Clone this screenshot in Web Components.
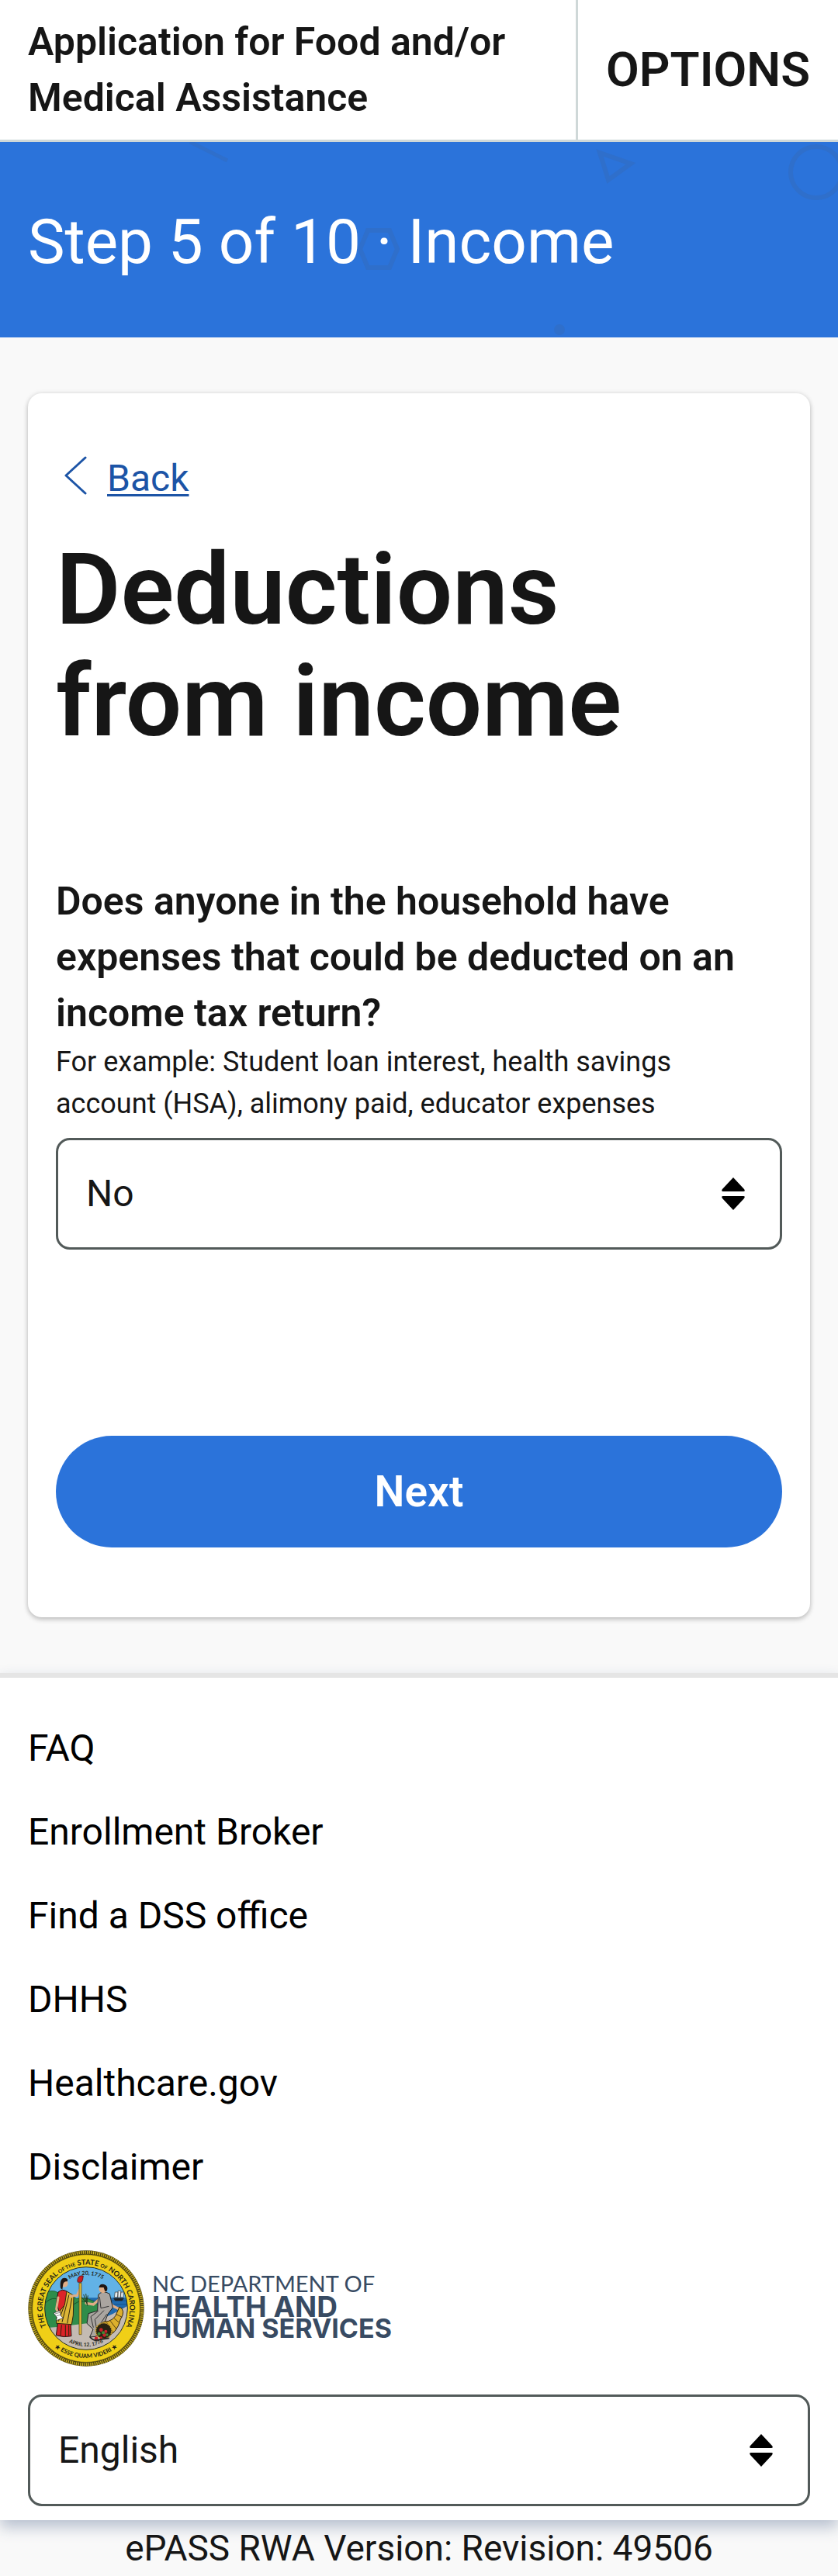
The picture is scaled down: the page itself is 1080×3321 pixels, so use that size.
<!DOCTYPE html>
<html lang="en">
<head>
<meta charset="utf-8">
<meta name="viewport" content="width=device-width, initial-scale=1">
<title>Deductions from income</title>
<style>
  :root {
    --ink: #161616;
    --blue: #2b73da;
    --link: #1c54a6;
    --field-border: #525a59;
    --gutter: 36px;
  }
  body {
    margin: 0;
    background: #f9f9f9;
    color: var(--ink);
    font-family: Roboto, "Liberation Sans", sans-serif;
    font-size: 48px;
    line-height: 72px;
  }
</style>
</head>
<body>
<epass-app></epass-app>

<template id="t-app">
  <style>
    :host { display: block; }
    main { padding: 72px var(--gutter); }
    .version { text-align: center; font-size: 46px; }
  </style>
  <epass-header>Application for Food and/or Medical Assistance</epass-header>
  <epass-step>Step 5 of 10 · Income</epass-step>
  <main>
    <epass-card>
      <epass-back></epass-back>
      <epass-heading>Deductions from income</epass-heading>
      <epass-select
        label="Does anyone in the household have expenses that could be deducted on an income tax return?"
        hint="For example: Student loan interest, health savings account (HSA), alimony paid, educator expenses"
        options="No,Yes"></epass-select>
      <epass-button>Next</epass-button>
    </epass-card>
  </main>
  <epass-footer></epass-footer>
  <div class="version">ePASS RWA Version: Revision: 49506</div>
</template>

<template id="t-header">
  <style>
    :host { display: block; background: #fff; border-bottom: 3px solid #cfd8d8; }
    header { display: flex; min-height: 180px; }
    .title { flex: 1; display: flex; align-items: center; padding: 0 var(--gutter); font-size: 50px; font-weight: 600; }
    button { margin: 0; border: 0; border-left: 3px solid #cfd8d8; background: none; color: inherit; font: 600 62px/72px Roboto, sans-serif; padding: 0 var(--gutter); }
  </style>
  <header>
    <div class="title"><span><slot></slot></span></div>
    <button type="button">OPTIONS</button>
  </header>
</template>

<template id="t-step">
  <style>
    :host { display: grid; background: var(--blue); color: #fff; overflow: hidden; }
    svg, p { grid-area: 1 / 1; }
    svg { width: 100%; height: 252px; }
    p { margin: 0; padding: 69px var(--gutter) 63px; font-size: 80px; line-height: 120px; }
  </style>
  <svg viewBox="0 0 1080 252" preserveAspectRatio="xMinYMin slice" fill="none" stroke="#2f6fcb" stroke-width="6" aria-hidden="true">
    <path d="M245 0L293 24" stroke-width="5"/>
    <path d="M773 14L813 28L784 49Z"/>
    <circle cx="1052" cy="39" r="33"/>
    <path d="M474 114H502L512 138L502 162H474L464 138Z"/>
    <circle cx="721" cy="242" r="7" fill="#2f6fcb" stroke="none"/>
  </svg>
  <p><slot></slot></p>
</template>

<template id="t-card">
  <style>
    :host { display: flex; flex-direction: column; background: #fff; border-radius: 18px; padding: 74px var(--gutter) 90px; box-shadow: 0 3px 6px rgba(0,0,0,.2), 0 0 6px rgba(0,0,0,.1); }
  </style>
  <slot></slot>
</template>

<template id="t-back">
  <style>
    :host { display: flex; }
    a { display: flex; align-items: center; gap: 26px; padding-left: 10px; color: var(--link); text-decoration: none; }
    span { text-decoration: underline; text-decoration-thickness: 3px; text-underline-offset: 4px; }
    svg { width: 30px; height: 50px; margin-bottom: 8px; }
  </style>
  <a href="#back">
    <svg viewBox="0 0 30 50" fill="none" stroke="currentColor" stroke-width="3" stroke-linecap="round" stroke-linejoin="round" aria-hidden="true"><path d="M28 2L3 25L28 48"/></svg>
    <span>Back</span>
  </a>
</template>

<template id="t-heading">
  <style>
    :host { display: block; margin-top: 35px; }
    h1 { margin: 0; font-size: 128px; line-height: 144px; font-weight: 600; }
  </style>
  <h1><slot></slot></h1>
</template>

<template id="t-select">
  <style>
    :host { display: block; margin-top: 150px; }
    :host([bare]) { margin-top: 0; }
    label { display: block; font-size: 50px; font-weight: 600; }
    .hint { margin-bottom: 17px; padding-right: var(--gutter); font-size: 36px; line-height: 54px; }
    .box { display: grid; align-items: center; }
    select, svg { grid-area: 1 / 1; }
    select { appearance: none; width: 100%; height: 144px; margin: 0; padding: 0 108px 0 36px; border: 3px solid var(--field-border); border-radius: 18px; background: #fff; color: var(--ink); font: 48px/72px Roboto, sans-serif; }
    svg { justify-self: end; width: 30px; height: 42px; margin-right: 48px; pointer-events: none; z-index: 1; }
  </style>
  <label for="field"></label>
  <div class="hint" id="hint"></div>
  <div class="box">
    <select id="field"></select>
    <svg viewBox="0 0 30 42" aria-hidden="true"><path d="M15 0L29 15Q31 18 28 18H2Q-1 18 1 15ZM15 42L29 27Q31 24 28 24H2Q-1 24 1 27Z"/></svg>
  </div>
</template>

<template id="t-button">
  <style>
    :host { display: block; margin-top: 240px; }
    button { display: block; width: 100%; height: 144px; margin: 0; padding: 0; border: 0; border-radius: 72px; background: var(--blue); color: #fff; font: 600 55px/72px Roboto, sans-serif; }
  </style>
  <button type="button"><slot></slot></button>
</template>

<template id="t-footer">
  <style>
    :host { display: flex; flex-direction: column; gap: 36px; padding: 37px var(--gutter) 18px; background: #fff; border-top: 6px solid #e5e5e5; box-shadow: 0 9px 18px rgba(30,60,110,.3); }
    ul { list-style: none; margin: 0 0 17px; padding: 0; }
    a { color: #000; text-decoration: none; line-height: 108px; }
    li { height: 108px; }
  </style>
  <nav aria-label="Footer">
    <ul>
      <li><a href="#faq">FAQ</a></li>
      <li><a href="#broker">Enrollment Broker</a></li>
      <li><a href="#dss">Find a DSS office</a></li>
      <li><a href="#dhhs">DHHS</a></li>
      <li><a href="#healthcare">Healthcare.gov</a></li>
      <li><a href="#disclaimer">Disclaimer</a></li>
    </ul>
  </nav>
  <epass-logo></epass-logo>
  <epass-select bare label="Language" options="English,Español"></epass-select>
</template>

<template id="t-logo">
  <style>
    :host { display: flex; align-items: center; gap: 10px; color: #384b63; font-family: Inter, sans-serif; font-weight: 700; }
    svg { width: 150px; height: 150px; flex: none; }
    .words { display: flex; flex-direction: column; padding-bottom: 8px; }
    .dept { font: 400 29px/32px Lato, sans-serif; }
    .health { font-size: 37px; line-height: 28px; }
    .human { font-size: 34px; line-height: 28px; }
  </style>
  <svg viewBox="48 63 450 450" aria-label="Great Seal of the State of North Carolina">
    <defs>
      <clipPath id="disc"><circle cx="273" cy="288" r="160"/></clipPath>
      <path id="arc" d="M136 387A169 169 0 1 1 410 387"/>
      <path id="bottom" d="M81 288A192 192 0 0 0 465 288"/>
      <path id="date1" d="M143 288A130 130 0 0 1 403 288"/>
      <path id="date2" d="M126 288A147 147 0 0 0 420 288"/>
    </defs>
    <circle cx="273" cy="288" r="224" fill="#4a410f"/>
    <circle cx="273" cy="288" r="217" fill="none" stroke="#cdb322" stroke-width="12" stroke-dasharray="4 4"/>
    <circle cx="273" cy="288" r="208" fill="#f0cf17" stroke="#6d6015" stroke-width="2"/>
    <g clip-path="url(#disc)">
      <path fill="#62b2e6" d="M110 120H440V300H110Z"/>
      <path fill="#206aae" d="M245 247H440V335H245Z"/>
      <path stroke="#104a80" stroke-width="2" d="M255 258H325M370 258H430M375 272H430M390 286H430"/>
      <path fill="#2f8d4a" stroke="#17552b" stroke-width="2" d="M105 235Q135 210 165 227Q205 222 235 250Q285 240 320 275L360 330L240 370H100Z"/>
      <path fill="none" stroke="#17552b" stroke-width="3" d="M112 270Q155 225 190 280M210 290Q240 245 285 267"/>
      <path fill="#c4bbb3" d="M100 365L160 360L300 343L375 310L440 275V460H100Z"/>
      <!-- tall ship -->
      <path fill="#e8edf0" stroke="#333" stroke-width="2" d="M385 225H396V245H382ZM397 220H407V246H394ZM408 225H417V245H405Z"/>
      <path fill="#222" d="M378 248H420L412 259H385Z"/>
      <!-- Liberty -->
      <path fill="#db2328" stroke="#201414" stroke-width="3" d="M165 225Q180 211 198 222L213 245L210 294L216 395Q188 402 157 392L169 304L158 263Z"/>
      <path fill="#dcb637" stroke="#30260d" stroke-width="3" d="M198 222L225 238L223 315L217 350L158 346L160 311L190 275Z"/>
      <path fill="none" stroke="#30260d" stroke-width="3" d="M207 235L180 341M218 248L200 346M188 278L166 338M178 352L174 393M193 352V396M206 352V393"/>
      <circle cx="188" cy="191" r="15" fill="#dfad86"/>
      <path fill="#201612" d="M174 210Q169 170 190 170Q206 172 200 184Q188 181 184 194L181 215Z"/>
      <path fill="none" stroke="#dfad86" stroke-width="9" stroke-linecap="round" d="M165 246L158 290L165 305M212 241L238 238L247 217"/>
      <path fill="#fff" stroke="#222" stroke-width="2" d="M147 306L171 297L176 318L185 325L157 335L160 323Z"/>
      <path stroke="#555" stroke-width="2" d="M153 309L171 304M158 317L174 313"/>
      <!-- liberty cap on its pole -->
      <path fill="#e2ba3a" stroke="#4c3b0d" stroke-width="2" d="M246 190H255V389H246Z"/>
      <path fill="#c91b22" stroke="#331010" stroke-width="2" d="M239 181Q241 158 262 162Q261 180 255 187H241Z"/>
      <!-- Plenty -->
      <path fill="none" stroke="#dfad86" stroke-width="10" stroke-linecap="round" d="M322 254L301 273L273 268M355 250L375 278L397 289"/>
      <path fill="#aaa5a0" stroke="#222" stroke-width="3" d="M320 235Q338 216 364 232L376 285L357 310L345 342L310 397L287 399L300 369L276 346L282 308L317 297Z"/>
      <path fill="none" stroke="#333" stroke-width="3" d="M325 243L330 287L361 280M320 298L291 320L301 362M342 296L307 331L315 375M353 310L329 346"/>
      <circle cx="338" cy="214" r="15" fill="#dfad86"/>
      <path fill="#201612" d="M322 207Q326 191 342 195Q360 201 354 220L346 223L341 207Z"/>
      <path fill="none" stroke="#273b20" stroke-width="3" d="M279 278L263 234M277 270L272 231M275 266L280 238M272 264L256 245"/>
      <!-- cornucopia -->
      <path fill="#dcaf2d" stroke="#30230b" stroke-width="3" d="M402 282Q428 296 406 330Q392 388 346 399L316 366L340 340Q382 340 394 300Z"/>
      <path fill="none" stroke="#594313" stroke-width="3" d="M352 342L378 383M367 337L391 369M381 326L403 345M390 311L412 322"/>
      <ellipse cx="341" cy="375" rx="31" ry="31" fill="#282313" stroke="#caa02a" stroke-width="5" stroke-dasharray="5 3"/>
      <g fill="#c7222a"><circle cx="331" cy="371" r="7"/><circle cx="349" cy="377" r="6"/><circle cx="344" cy="391" r="7"/><circle cx="312" cy="404" r="7"/><circle cx="331" cy="402" r="5"/></g>
      <g fill="#3e8b36"><circle cx="339" cy="382" r="6"/><circle cx="323" cy="386" r="6"/><circle cx="354" cy="390" r="5"/></g>
      <path fill="none" stroke="#222" stroke-width="5" d="M288 398Q302 417 323 409L362 403"/>
    </g>
    <circle cx="273" cy="288" r="160" fill="none" stroke="#29301c" stroke-width="3"/>
    <g fill="#231f14" font-family="Lato, sans-serif" text-anchor="middle">
      <text font-size="28" font-weight="700"><textPath href="#arc" startOffset="50%">THE GREAT SEAL <tspan font-size="20">OF THE</tspan> STATE <tspan font-size="20">OF</tspan> NORTH CAROLINA</textPath></text>
      <text font-size="23" font-weight="700"><textPath href="#bottom" startOffset="50%">★ ESSE QUAM VIDERI ★</textPath></text>
      <text font-size="21"><textPath href="#date1" startOffset="50%">MAY 20, 1775</textPath></text>
      <text font-size="20"><textPath href="#date2" startOffset="50%">APRIL 12, 1776</textPath></text>
    </g>
  </svg>
  <div class="words">
    <span class="dept">NC DEPARTMENT OF</span>
    <span class="health">HEALTH AND</span>
    <span class="human">HUMAN SERVICES</span>
  </div>
</template>

<script>
  class EpassElement extends HTMLElement {
    constructor() {
      super();
      const id = 't-' + this.localName.replace('epass-', '');
      this.attachShadow({ mode: 'open' })
        .append(document.getElementById(id).content.cloneNode(true));
    }
  }

  class EpassSelect extends EpassElement {
    connectedCallback() {
      const root = this.shadowRoot;
      const select = root.querySelector('select');
      const label = this.getAttribute('label');
      const hint = this.getAttribute('hint');
      if (this.hasAttribute('bare')) {
        root.querySelector('label').remove();
        select.setAttribute('aria-label', label);
      } else {
        root.querySelector('label').textContent = label;
      }
      if (hint) {
        root.querySelector('.hint').textContent = hint;
        select.setAttribute('aria-describedby', 'hint');
      } else {
        root.querySelector('.hint').remove();
      }
      select.replaceChildren(...this.getAttribute('options').split(',').map(name => new Option(name)));
    }
  }

  customElements.define('epass-header', class extends EpassElement {});
  customElements.define('epass-step', class extends EpassElement {});
  customElements.define('epass-card', class extends EpassElement {});
  customElements.define('epass-back', class extends EpassElement {});
  customElements.define('epass-heading', class extends EpassElement {});
  customElements.define('epass-select', EpassSelect);
  customElements.define('epass-button', class extends EpassElement {});
  customElements.define('epass-logo', class extends EpassElement {});
  customElements.define('epass-footer', class extends EpassElement {});
  customElements.define('epass-app', class extends EpassElement {});
</script>
</body>
</html>
